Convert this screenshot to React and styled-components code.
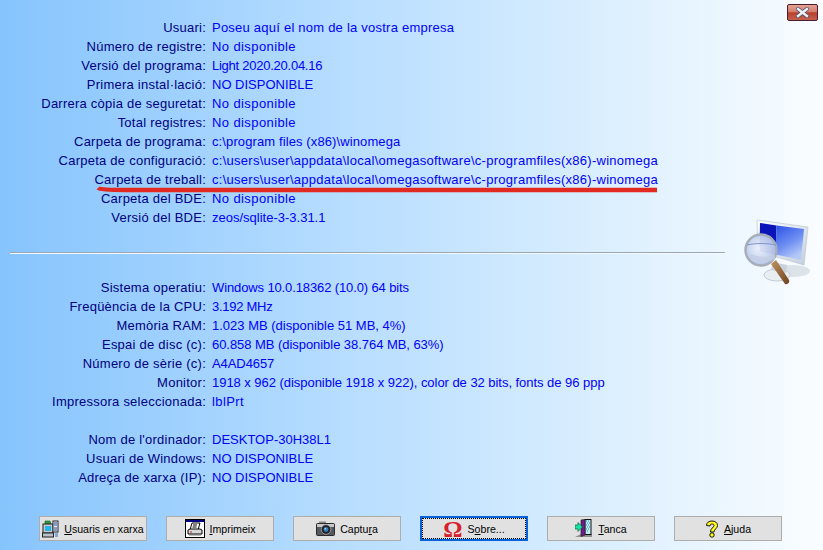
import React from 'react';
import styled, { createGlobalStyle } from 'styled-components';

const Global = createGlobalStyle`
  html, body { margin: 0; padding: 0; height: 100%; }
  body { font-family: "Liberation Sans", Arial, sans-serif; overflow: hidden; }
`;

const Page = styled.div`
  width: 823px;
  height: 550px;
  box-sizing: border-box;
  background: linear-gradient(90deg, #86c4fd 0%, #b5dcff 40%, #d9eefe 72%, #fafdff 100%);
  display: flex;
  flex-direction: column;
`;
const Main = styled.div`
  display: flex;
  flex: 1;
  min-height: 0;
`;
const Info = styled.div`
  width: 715px;
  margin-left: 10px;
  padding-top: 18px;
  display: flex;
  flex-direction: column;
`;
const Aside = styled.div`
  flex: 1;
  display: flex;
  flex-direction: column;
  padding: 4px 5px 0 0;
`;
const Group = styled.div`
  display: flex;
  flex-direction: column;
  margin-top: ${p => p.$top || 0}px;
`;
const Row = styled.div`
  position: relative;
  display: flex;
  height: 19px;
  line-height: 20px;
  font-size: 13px;
  white-space: nowrap;
`;
const Label = styled.span`
  width: 196px;
  text-align: right;
  color: #00007f;
  letter-spacing: 0.24px;
`;
const Value = styled.span`
  margin-left: 6px;
  color: #0000f5;
  letter-spacing: ${p => p.$track}px;
`;
const Rule = styled.div`
  height: 1px;
  margin-top: 25px;
  background: #9aa6b0;
  border-bottom: 1px solid #f4faff;
`;
const RedMark = styled.svg`
  position: absolute;
  left: 86px;
  top: 15px;
  overflow: visible;
`;
const CloseButton = styled.div`
  align-self: flex-end;
  width: 31px;
  height: 17px;
  box-sizing: border-box;
  border: 1px solid #4b1c2e;
  border-radius: 2px;
  background: linear-gradient(180deg, #e3a394 0%, #d67e6c 45%, #b8402c 52%, #c4604c 100%);
  display: flex;
  align-items: center;
  justify-content: center;
`;
const BigIcon = styled.svg`
  margin: 197px 0 0 18px;
`;
const Toolbar = styled.div`
  display: flex;
  gap: 19px;
  padding: 0 0 9px 39px;
`;
const Button = styled.div`
  width: 108px;
  height: 25px;
  box-sizing: border-box;
  border: ${p => (p.$focused ? '2px solid #0a63d6' : '1px solid #adadad')};
  background: #e1e1e1;
  display: flex;
  align-items: center;
  justify-content: center;
  gap: 5px;
  position: relative;
  font-size: 10.6px;
  color: #000;
  white-space: nowrap;
  &::after {
    content: ${p => (p.$focused ? '""' : 'none')};
    position: absolute;
    inset: 0;
    border: 1px dotted #000;
  }
`;
const Mnemonic = styled.span`
  text-decoration: underline;
`;
const Omega = styled.span`
  font-family: "Liberation Serif", serif;
  font-size: 24px;
  line-height: 20px;
  font-weight: 700;
  color: #d6202a;
`;

const path = 'c:\\users\\user\\appdata\\local\\omegasoftware\\c-programfiles(x86)-winomega';
const top = [
  ['Usuari:', 'Poseu aquí el nom de la vostra empresa', 0.23],
  ['Número de registre:', 'No disponible', 0.4],
  ['Versió del programa:', 'Light 2020.20.04.16', -0.25],
  ['Primera instal·lació:', 'NO DISPONIBLE', 0],
  ['Darrera còpia de seguretat:', 'No disponible', 0.4],
  ['Total registres:', 'No disponible', 0.4],
  ['Carpeta de programa:', 'c:\\program files (x86)\\winomega', 0.11],
  ['Carpeta de configuració:', path, 0.27],
  ['Carpeta de treball:', path, 0.27, true],
  ['Carpeta del BDE:', 'No disponible', 0.4],
  ['Versió del BDE:', 'zeos/sqlite-3-3.31.1', 0],
];
const system = [
  ['Sistema operatiu:', 'Windows 10.0.18362 (10.0) 64 bits', -0.12],
  ['Freqüència de la CPU:', '3.192 MHz', -0.27],
  ['Memòria RAM:', '1.023 MB (disponible 51 MB, 4%)', 0],
  ['Espai de disc (c):', '60.858 MB (disponible 38.764 MB, 63%)', -0.05],
  ['Número de sèrie (c):', 'A4AD4657', -0.08],
  ['Monitor:', '1918 x 962 (disponible 1918 x 922), color de 32 bits, fonts de 96 ppp', -0.04],
  ['Impressora seleccionada:', 'lblPrt', 0.4],
];
const net = [
  ["Nom de l'ordinador:", 'DESKTOP-30H38L1', 0],
  ['Usuari de Windows:', 'NO DISPONIBLE', 0],
  ['Adreça de xarxa (IP):', 'NO DISPONIBLE', 0],
];

const Rows = ({ items }) =>
  items.map(([l, v, track, mark]) => (
    <Row key={l}>
      <Label>{l}</Label>
      <Value $track={track}>{v}</Value>
      {mark && (
        <RedMark width="562" height="8" viewBox="0 0 562 8">
          <path d="M2 3 Q4 5 30 5 L561 5" fill="none" stroke="#e32a20" strokeWidth="4.4" />
        </RedMark>
      )}
    </Row>
  ));

const NetIcon = () => (
  <svg width="17" height="18" viewBox="0 0 17 18">
    <path d="M3 1h5l1 3H3z" fill="#2f9e3f" stroke="#0b5a20" strokeWidth=".6" />
    <rect x="1" y="4" width="10" height="9" fill="#c9c9c9" stroke="#222" />
    <rect x="3" y="6" width="6" height="5" fill="#23b6ee" />
    <rect x="11" y="1" width="5" height="11" fill="#efefef" stroke="#223" />
    <path d="M12 3h3M12 5h3M12 8h3M12 10h3" stroke="#1c4a9a" />
    <rect x="0.5" y="13" width="11" height="4" fill="#b9c2c8" stroke="#222" />
    <path d="M13 14h3M13 16h3" stroke="#2a6cc0" />
  </svg>
);
const PrintIcon = () => (
  <svg width="20" height="19" viewBox="0 0 20 19">
    <rect x=".5" y=".5" width="19" height="18" fill="#fff" stroke="#000" />
    <rect x="1" y="1" width="18" height="2" fill="#000080" />
    <path d="M7 4h8l-2 7H5z" fill="#fff" stroke="#000" />
    <path d="M8 6h4M7.500 8h4" stroke="#000" />
    <path d="M3 11l2-1h10l2 1v4H3z" fill="#d8d8d8" stroke="#000" />
    <rect x="4" y="15" width="12" height="1.500" fill="#777" />
    <rect x="5" y="12.500" width="2" height="1" fill="#c22" />
  </svg>
);
const CameraIcon = () => (
  <svg width="19" height="15" viewBox="0 0 19 15">
    <rect x="3" y="0.500" width="7" height="2.500" fill="#8a8a8a" />
    <rect x="0.500" y="2.500" width="18" height="12" rx="1" fill="#55585c" stroke="#2a2a2a" />
    <rect x="1" y="3" width="17" height="3" fill="#c6c8ca" />
    <circle cx="10" cy="8.500" r="4.800" fill="#222" stroke="#aab" strokeWidth=".8" />
    <circle cx="10" cy="8.500" r="2.400" fill="#2f7fc4" />
    <circle cx="9.300" cy="7.700" r=".8" fill="#cfe8ff" />
  </svg>
);
const ExitIcon = () => (
  <svg width="18" height="19" viewBox="0 0 18 19">
    <path d="M0 18l6-3h11v3z" fill="#8f8f8f" />
    <rect x="10" y="0.500" width="6" height="15" fill="#bfeef2" stroke="#111" />
    <path d="M11 2h1M13 2h1M12 4h1M14 4h1M11 6h1M13 6h1M12 8h1M14 8h1M11 10h1M13 10h1M12 12h1" stroke="#3a7fb5" />
    <path d="M6 1l4-.5V16l-4 1.500z" fill="#6a1b8c" stroke="#222" strokeWidth=".7" />
    <path d="M0 6h3V3.500L7.500 8 3 12.500V10H0z" fill="#17e3a3" stroke="#063" strokeWidth=".7" />
  </svg>
);
const HelpIcon = () => (
  <svg width="14" height="18" viewBox="0 0 14 18">
    <path d="M1.500 5.500C1.500 2.500 4 1 7 1s5.500 1.500 5.500 4.500c0 3-3.500 3.500-3.500 6.500H5.500c0-4 3.500-4.500 3.500-6.500 0-1-1-1.500-2-1.500-1.300 0-2 .8-2 2z" fill="#ffff20" stroke="#000" strokeWidth=".9" />
    <circle cx="7" cy="15" r="2.200" fill="#ffff20" stroke="#000" strokeWidth=".9" />
  </svg>
);

export default function App() {
  return (
    <Page>
      <Global />
      <Main>
        <Info>
          <Group><Rows items={top} /></Group>
          <Rule />
          <Group $top={24}><Rows items={system} /></Group>
          <Group $top={19}><Rows items={net} /></Group>
        </Info>
        <Aside>
          <CloseButton>
            <svg width="13" height="11" viewBox="0 0 13 11">
              <path d="M2 2l9 7M11 2l-9 7" stroke="#4a4f66" strokeWidth="4" strokeLinecap="square" />
              <path d="M2 2l9 7M11 2l-9 7" stroke="#eef0f6" strokeWidth="2.400" strokeLinecap="square" />
            </svg>
          </CloseButton>
          <BigIcon width="70" height="70" viewBox="742 218 70 70">
            <defs>
              <linearGradient id="frame" x1="0" y1="0" x2="1" y2="1">
                <stop offset="0" stopColor="#ffffff" />
                <stop offset="1" stopColor="#c4cfdc" />
              </linearGradient>
              <linearGradient id="panel" x1="0" y1="0" x2=".5" y2="1">
                <stop offset="0" stopColor="#2a50e6" />
                <stop offset=".6" stopColor="#6f90f2" />
                <stop offset="1" stopColor="#b5c9f8" />
              </linearGradient>
              <radialGradient id="lens" cx=".45" cy=".45" r=".6">
                <stop offset="0" stopColor="#eef3fc" stopOpacity=".92" />
                <stop offset="1" stopColor="#aebfe6" stopOpacity=".95" />
              </radialGradient>
              <linearGradient id="handle" x1="0" y1="0" x2="1" y2="1">
                <stop offset="0" stopColor="#c49360" />
                <stop offset="1" stopColor="#6b4320" />
              </linearGradient>
            </defs>
            <ellipse cx="792" cy="271" rx="17" ry="6" fill="#d5dde4" opacity=".8" />
            <ellipse cx="776" cy="275" rx="13" ry="6" fill="#e9eef2" stroke="#c4ccd4" />
            <path d="M772 262l14 3-1 8-15-3z" fill="#c9d2da" />
            <path d="M756 220l51 7-4 38-27-8-19-4z" fill="url(#frame)" stroke="#b4bfcb" strokeWidth=".6" />
            <path d="M759 223l16.500 2.500-1 29-16-3z" fill="#0a14b8" />
            <path d="M775.500 225.500L803 229l-3 31-25.500-5.500z" fill="url(#panel)" />
            <path d="M770 264l5-4 13 20c1 2-1 5-4 4z" fill="url(#handle)" />
            <circle cx="760" cy="250" r="15.500" fill="url(#lens)" stroke="#a5adb8" strokeWidth="2.400" />
            <path d="M746 245c8-2 20-2 29 0" fill="none" stroke="#7f95c8" strokeWidth="1" />
            <path d="M747 253c8 4 20 5 27 2v4c-8 5-20 3-26-2z" fill="#c3cde6" opacity=".8" />
          </BigIcon>
        </Aside>
      </Main>
      <Toolbar>
        <Button><NetIcon /><span><Mnemonic>U</Mnemonic>suaris en xarxa</span></Button>
        <Button><PrintIcon /><span><Mnemonic>I</Mnemonic>mprimeix</span></Button>
        <Button><CameraIcon /><span>Captu<Mnemonic>r</Mnemonic>a</span></Button>
        <Button $focused><Omega>Ω</Omega><span>S<Mnemonic>o</Mnemonic>bre...</span></Button>
        <Button><ExitIcon /><span><Mnemonic>T</Mnemonic>anca</span></Button>
        <Button><HelpIcon /><span><Mnemonic>A</Mnemonic>juda</span></Button>
      </Toolbar>
    </Page>
  );
}
